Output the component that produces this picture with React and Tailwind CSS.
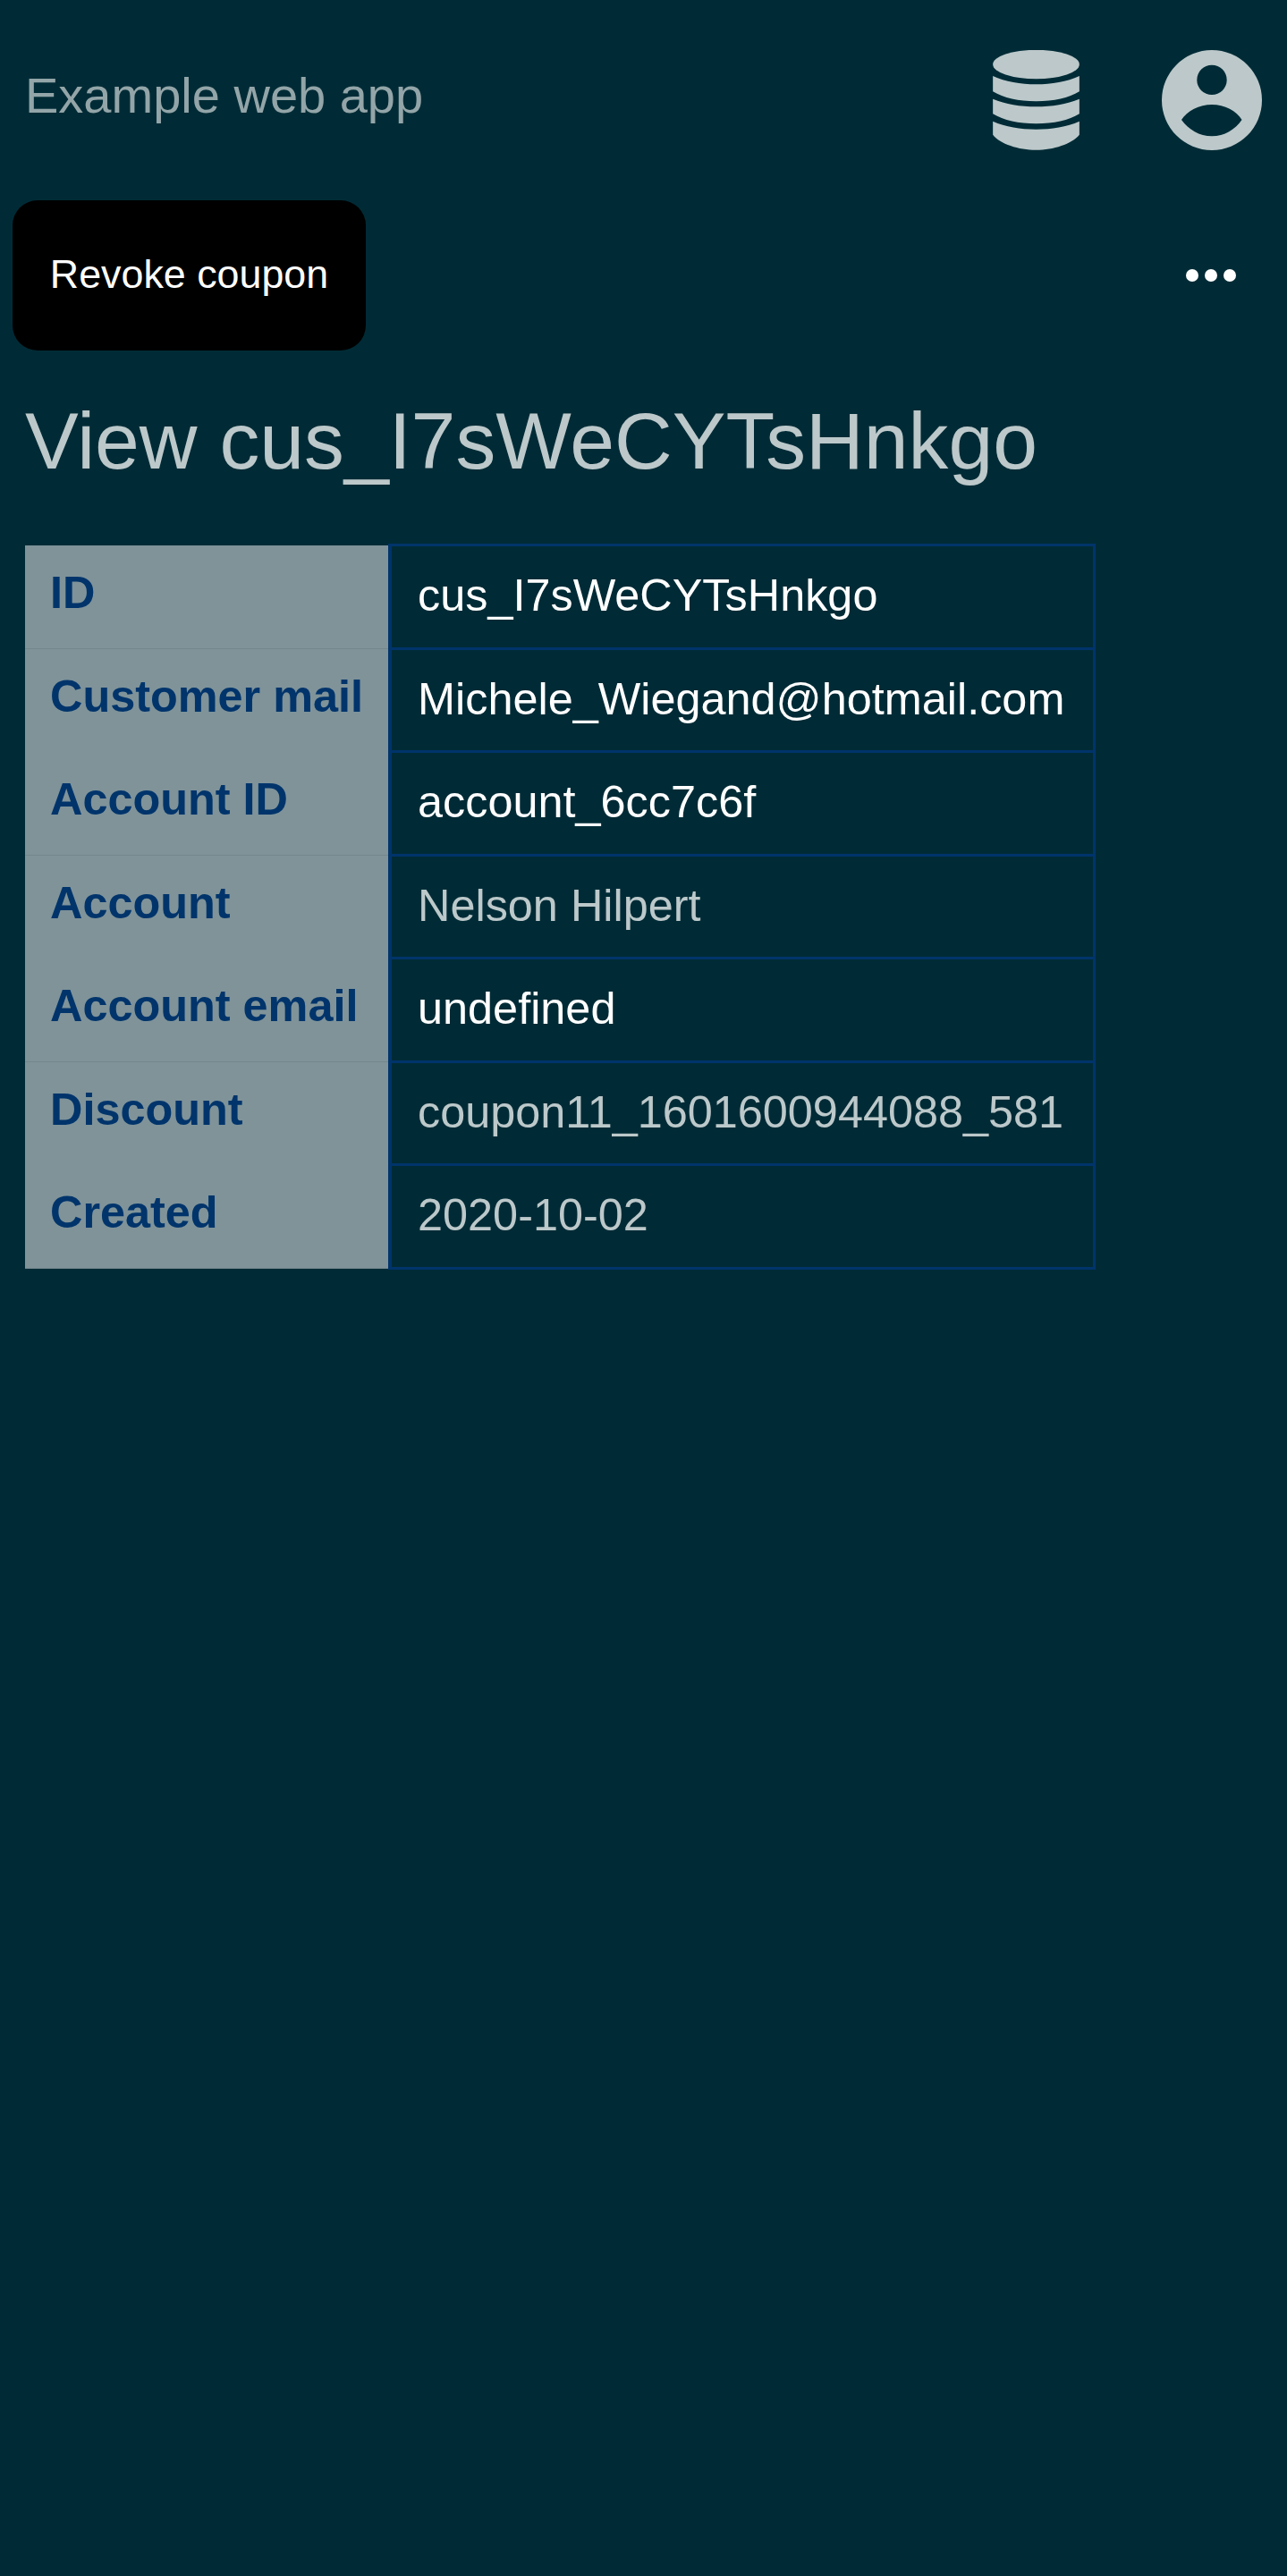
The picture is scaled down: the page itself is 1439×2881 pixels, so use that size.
const rows = [
  ["ID", "cus_I7sWeCYTsHnkgo", true],
  ["Customer mail", "Michele_Wiegand@hotmail.com", true],
  ["Account ID", "account_6cc7c6f", true],
  ["Account", "Nelson Hilpert", false],
  ["Account email", "undefined", true],
  ["Discount", "coupon11_1601600944088_581", false],
  ["Created", "2020-10-02", false],
];

const DatabaseIcon = () => (
  <svg viewBox="0 0 96.7 112" className="w-[97px] h-[112px] text-[#bcc8ca]" fill="currentColor">
    <ellipse cx="48.35" cy="16" rx="48.35" ry="16.2" />
    <path d="M0 29C14 35.5 31 38.3 48.35 38.3S82.7 35.5 96.7 29V46.3C85 53.5 68 57.3 48.35 57.3S12 53.5 0 46.3z" />
    <path d="M0 54.7C14 60.5 31 63.3 48.35 63.3S82.7 60.5 96.7 54.7V71.3C85 78.5 68 82.3 48.35 82.3S12 78.5 0 71.3z" />
    <path d="M0 79.7C14 85.8 31 88.7 48.35 88.7S82.7 85.8 96.7 79.7V94.7C88 105 68 111.7 48.35 111.7S8 105 0 94.7z" />
  </svg>
);

const UserIcon = () => (
  <svg viewBox="0 0 112 112" className="w-[112px] h-[112px] text-[#bcc8ca]">
    <path
      fill="currentColor"
      fillRule="evenodd"
      d="M56 0a56 56 0 1 0 0 112a56 56 0 1 0 0-112zM56 16.7a16.7 16.7 0 1 1 0 33.4a16.7 16.7 0 1 1 0-33.4zM22 78C28 68 42 61 56 61C70 61 84 68 89.5 78C82 89 70 96.3 56 96.3C42 96.3 30 89 22 78z"
    />
  </svg>
);

const App = () => {
  return (
    <div className="min-h-[2881px] bg-[#002b36] font-['Liberation_Sans',Arial,sans-serif]">
      <header className="flex items-center justify-between px-7 py-14">
        <span className="-mt-[10px] text-[56px] leading-[64px] text-[#93a5a8]">Example web app</span>
        <div className="flex items-center gap-[92px]">
          <DatabaseIcon />
          <UserIcon />
        </div>
      </header>

      <div className="flex items-center justify-between pl-[14px] pr-[57px]">
        <button className="h-[168px] w-[395px] rounded-[28px] bg-black pb-[2px] text-[44.8px] text-white">
          Revoke coupon
        </button>
        <div className="flex gap-[7px]">
          <span className="w-[14px] h-[14px] rounded-full bg-white" />
          <span className="w-[14px] h-[14px] rounded-full bg-white" />
          <span className="w-[14px] h-[14px] rounded-full bg-white" />
        </div>
      </div>

      <h1 className="pl-7 pt-[50px] pb-[63px] text-[89.6px] leading-[103px] font-normal text-[#bcc8ca]">
        View cus_I7sWeCYTsHnkgo
      </h1>

      <table className="ml-7 border-collapse text-[50.4px] leading-[58px]">
        <tbody>
          {rows.map(([label, value, strong], i) => (
            <tr key={label}>
              <th className={"align-top bg-[#7f9399] px-[28px] pt-[24px] pb-[28px] text-left font-bold text-[#00346b] " + (i % 2 === 0 ? "border-b border-[#74878d]" : "")}>
                {label}
              </th>
              <td className={"border-[3px] border-l-[4px] border-[#00346b] pl-[29px] pr-[32px] pt-[26.25px] pb-[28.25px] " + (strong ? "text-white" : "text-[#bcc8ca]")}>
                {value}
              </td>
            </tr>
          ))}
        </tbody>
      </table>
    </div>
  );
};

export default App;
